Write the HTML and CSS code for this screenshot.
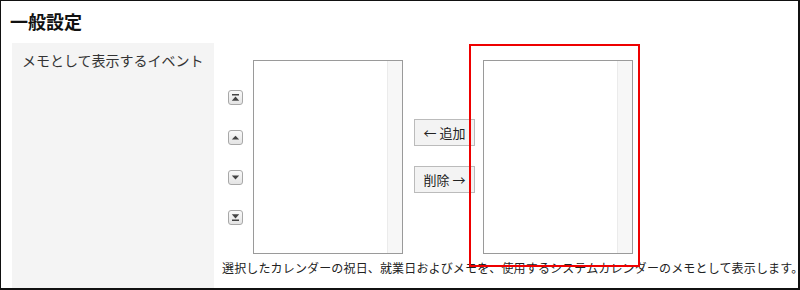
FILE: index.html
```html
<!DOCTYPE html>
<html lang="ja">
<head>
<meta charset="utf-8">
<link rel="stylesheet" href="styles.css">
</head>
<body>
<div class="frame">
  <h1 class="title">一般設定</h1>
  <div class="row">
    <div class="label">メモとして表示するイベント</div>
    <div class="content">
      <div class="selector">
        <div class="order">
          <button class="obtn" title="top"><svg width="9" height="9" viewBox="0 0 9 9"><rect x="1" y="1" width="7" height="1.5" fill="#444"/><path d="M0.8 7.8 L4.5 3.4 L8.2 7.8 Z" fill="#444"/></svg></button>
          <button class="obtn" title="up"><svg width="9" height="9" viewBox="0 0 9 9"><path d="M0.8 6.6 L4.5 2.8 L8.2 6.6 Z" fill="#444"/></svg></button>
          <button class="obtn" title="down"><svg width="9" height="9" viewBox="0 0 9 9"><path d="M0.8 2.6 L4.5 6.4 L8.2 2.6 Z" fill="#444"/></svg></button>
          <button class="obtn" title="bottom"><svg width="9" height="9" viewBox="0 0 9 9"><path d="M0.8 1.2 L4.5 5.6 L8.2 1.2 Z" fill="#444"/><rect x="1" y="6.5" width="7" height="1.5" fill="#444"/></svg></button>
        </div>
        <div class="listbox"><div class="scroll"></div></div>
        <div class="moves">
          <button class="mbtn">← 追加</button>
          <button class="mbtn">削除 →</button>
        </div>
        <div class="listbox"><div class="scroll"></div></div>
      </div>
      <p class="desc">選択したカレンダーの祝日、就業日およびメモを、使用するシステムカレンダーのメモとして表示します。</p>
    </div>
  </div>
  <div class="highlight"></div>
</div>
</body>
</html>
```

FILE: styles.css
```css
* { box-sizing: border-box; }
html, body { margin: 0; padding: 0; background: #fff; }
body {
  font-family: "Noto Sans CJK JP", "Noto Sans", sans-serif;
  color: #222;
}
.frame {
  position: relative;
  width: 800px;
  height: 290px;
  border-top: 1px solid #111;
  border-left: 1px solid #111;
  border-right: 2px solid #111;
  border-bottom: 2px solid #111;
  overflow: hidden;
}
.title {
  margin: 0;
  padding: 9px 0 0 9px;
  font-size: 18px;
  line-height: 22px;
  font-weight: bold;
  color: #111;
  height: 42px;
}
.row {
  display: flex;
  margin-left: 11px;
  height: 245px;
}
.label {
  width: 202px;
  flex: none;
  background: #f4f4f4;
  padding: 8px 0 0 10px;
  font-size: 14px;
  line-height: 18px;
  color: #333;
}
.content {
  flex: 1;
  min-width: 0;
  padding: 17px 0 0 14px;
  display: flex;
  flex-direction: column;
}
.selector {
  display: flex;
  align-items: flex-start;
}
.order {
  display: flex;
  flex-direction: column;
  gap: 25px;
  padding-top: 30px;
  width: 15px;
  margin-right: 10px;
}
.obtn {
  width: 15px;
  height: 15px;
  padding: 0;
  margin: 0;
  border: 1px solid #a8a8a8;
  border-radius: 3px;
  background: linear-gradient(#fafafa, #e4e4e4);
  display: flex;
  align-items: center;
  justify-content: center;
}
.obtn svg { display: block; }
.listbox {
  width: 150px;
  height: 194px;
  border: 1px solid #9a9a9a;
  background: #fff;
  display: flex;
  justify-content: flex-end;
}
.scroll {
  width: 15px;
  height: 100%;
  background: #f7f7f7;
  border-left: 1px solid #ebebeb;
}
.moves {
  display: flex;
  flex-direction: column;
  gap: 20px;
  margin: 59px 8px 0 11px;
}
.mbtn {
  width: 61px;
  height: 27px;
  margin: 0;
  padding: 0;
  border: 1px solid #bbb;
  background: #f3f3f3;
  font-family: "Noto Sans CJK JP", "Noto Sans", sans-serif;
  font-size: 13px;
  line-height: 16px;
  color: #222;
}
.desc {
  margin: 6px 0 0 -6px;
  font-size: 12px;
  line-height: 16px;
  letter-spacing: 0.15px;
  white-space: nowrap;
  color: #222;
}
.highlight {
  position: absolute;
  left: 468px;
  top: 43px;
  width: 171px;
  height: 223px;
  border: 2px solid #ee0000;
  pointer-events: none;
}
```
